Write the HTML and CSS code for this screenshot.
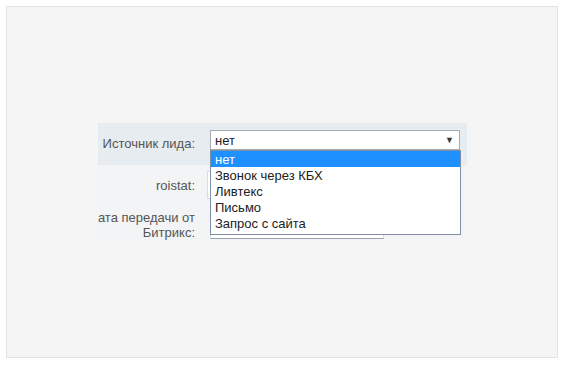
FILE: index.html
```html
<!DOCTYPE html>
<html lang="ru">
<head>
    <meta charset="UTF-8">
    <title>Настройки</title>
    <link rel="stylesheet" href="styles.css">
</head>
<body>
    <!-- внешняя панель -->
    <div class="panel">
        <div class="form">
            <div class="row head">
                <div class="label"><span>Источник лида:</span></div>
                <div class="field">
                    <div class="select">
                        <span>нет</span>
                        <span class="arr">&#9660;</span>
                    </div>
                    <!-- открытый список -->
                    <ul class="options">
                        <li class="on">нет</li>
                        <li>Звонок через КБХ</li>
                        <li>Ливтекс</li>
                        <li>Письмо</li>
                        <li>Запрос с сайта</li>
                    </ul>
                </div>
            </div>
            <div class="row">
                <div class="label"><span>roistat:</span></div>
                <div class="field"><div class="input"></div></div>
            </div>
            <div class="row last">
                <div class="label"><span>Дата передачи от<br>Битрикс:</span></div>
                <div class="field"><div class="input short"></div></div>
            </div>
        </div>
    </div>
</body>
</html>
```

FILE: styles.css
```css
*{
    margin: 0;
    padding: 0;
    list-style: none;
    box-sizing: border-box;
}
body{
    margin: 6px;
    font-family: "Liberation Sans", Arial, sans-serif;
    font-size: 13px;
    background: #fff;
}
.panel{
    width: 552px;
    height: 352px;
    border: 1px solid #e3e3e3;
    background: #f5f5f5;
    display: flex;
    align-items: center;
    justify-content: center;
    padding-top: 2px;
    padding-left: 1px;
}
.form{
    width: 369px;
    background: #f2f4f5;
    overflow: hidden;
}
.row{
    display: flex;
    align-items: center;
    height: 40px;
}
.row.head{
    height: 42px;
    align-items: flex-start;
    background: #e6ecef;
}
.row.last{
    height: 38px;
    padding-top: 2px;
}
.label{
    width: 107px;
    flex-shrink: 0;
    padding-right: 10px;
    text-align: right;
    color: #555;
    line-height: 15px;
    display: flex;
    justify-content: flex-end;
    white-space: nowrap;
}
.row.head .label{
    padding-top: 13px;
}
.field{
    position: relative;
    padding-left: 5px;
}
.row.head .field{
    padding-top: 7px;
}
.select{
    width: 250px;
    height: 20px;
    border: 1px solid #a5acb5;
    background: #fff;
    color: #222;
    display: flex;
    align-items: center;
    justify-content: space-between;
    padding: 0 5px 0 4px;
}
.arr{
    font-size: 9px;
    color: #333;
}
.options{
    position: absolute;
    left: 5px;
    top: 27px;
    width: 251px;
    background: #fff;
    border: 1px solid #7f8fa6;
    padding-bottom: 3px;
    color: #222;
    z-index: 2;
}
.options li{
    height: 16px;
    line-height: 17px;
    padding-left: 4px;
}
.options li.on{
    background: #1e90ff;
    color: #fff;
}
.input{
    width: 250px;
    height: 28px;
    margin-left: -3px;
    border: 1px solid #d8dde2;
    background: #fff;
}
.input.short{
    width: 174px;
    margin-left: 0;
    border-bottom-color: #9aa3ad;
}
```
